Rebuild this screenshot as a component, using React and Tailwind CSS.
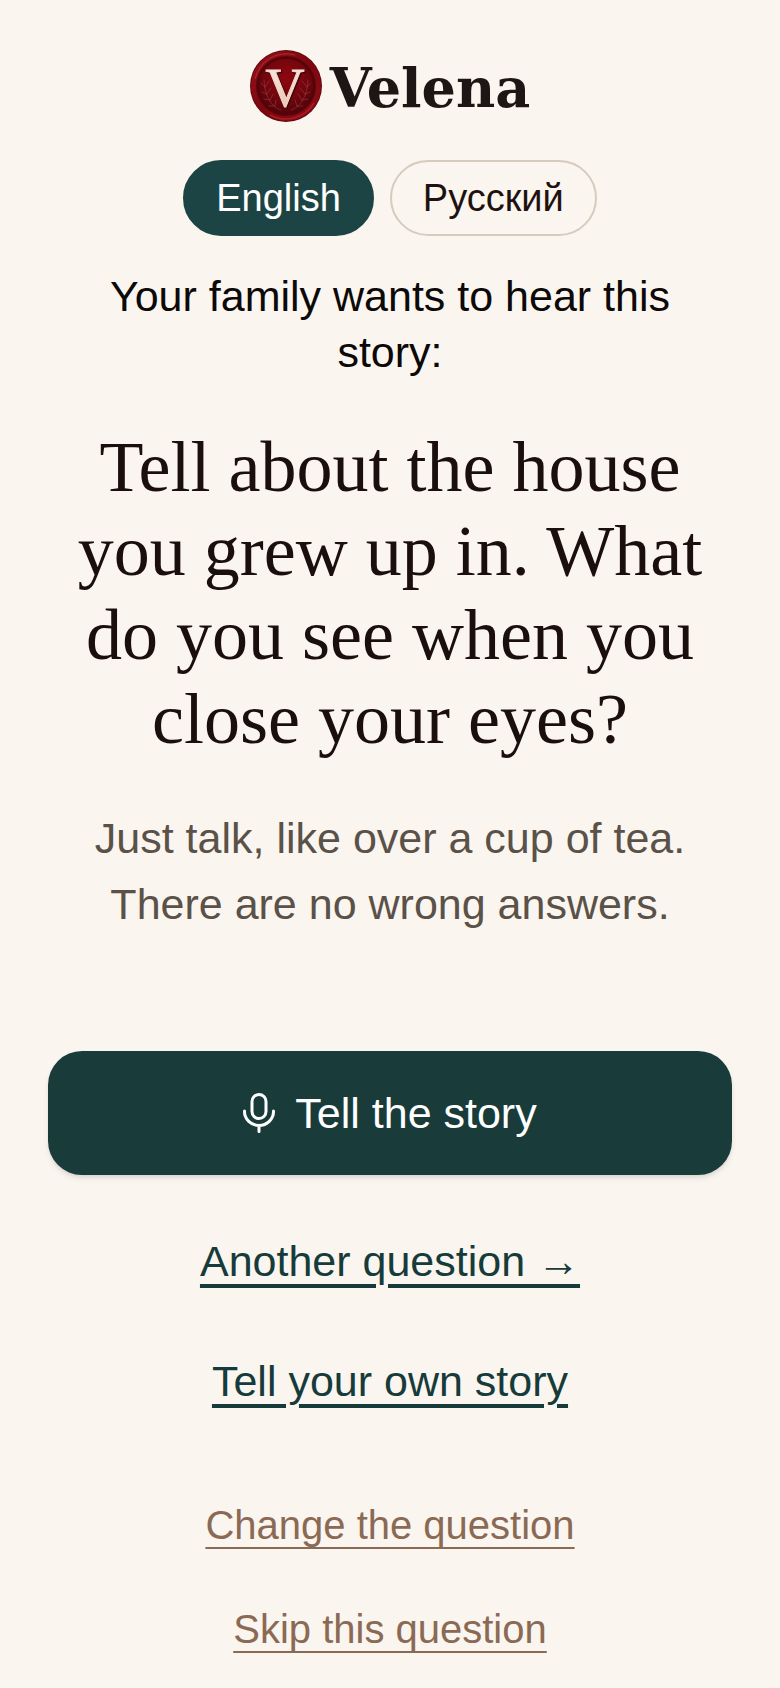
import React, { useState } from 'react';

const languages = [
  { code: 'en', label: 'English' },
  { code: 'ru', label: 'Русский' },
];

function Seal() {
  return (
    <svg viewBox="0 0 72 72" className="size-18 shrink-0" aria-hidden="true">
      <defs>
        <radialGradient id="wax" cx="50%" cy="35%" r="60%">
          <stop offset="0" stopColor="#8e0710" />
          <stop offset="0.6" stopColor="#74060e" />
          <stop offset="1" stopColor="#56040a" />
        </radialGradient>
        <linearGradient id="rim" x1="0" y1="0" x2="1" y2="1">
          <stop offset="0" stopColor="#98101a" />
          <stop offset="0.5" stopColor="#7c070f" />
          <stop offset="1" stopColor="#8e0d16" />
        </linearGradient>
        <linearGradient id="letter" x1="0" y1="0" x2="0" y2="1">
          <stop offset="0" stopColor="#fbeee4" />
          <stop offset="1" stopColor="#e8bfae" />
        </linearGradient>
      </defs>
      <circle cx="36" cy="36" r="36" fill="#5e050b" />
      <circle cx="36" cy="36" r="32.5" fill="none" stroke="url(#rim)" strokeWidth="5" />
      <path d="M5 29A32 32 0 0 1 45 5" fill="none" stroke="#b02a32" strokeWidth="1" />
      <path d="M20 65A33 33 0 0 0 64 53" fill="none" stroke="#a81c25" strokeWidth="1.5" />
      <circle cx="36" cy="36" r="28" fill="url(#wax)" stroke="#520409" strokeWidth="1.5" />
      <g fill="none" stroke="#b4505a" strokeWidth="0.7" strokeLinecap="round" opacity="0.6">
        <path d="M31 60C22 57 15 48 14 30M15 37l-4-4M15 37l4-6M17 44l-5-2M17 44l4-6M20 50l-6-1M20 50l3-6M25 56l-6 0M25 56l1-6" />
        <path d="M41 60C50 57 57 48 58 30M57 37l4-4M57 37l-5-6M55 44l5-2M55 44l-5-6M52 50l6-1M52 50l-4-6M47 56l6 0M47 56l-2-6" />
      </g>
      <text
        x="36"
        y="57"
        textAnchor="middle"
        fontSize="54"
        fill="#42030a"
        stroke="#42030a"
        strokeWidth="1.5"
        className="font-['Liberation_Serif',serif]"
      >
        V
      </text>
      <text
        x="35"
        y="56"
        textAnchor="middle"
        fontSize="54"
        fill="url(#letter)"
        stroke="#f3d8ca"
        strokeWidth="1"
        className="font-['Liberation_Serif',serif]"
      >
        V
      </text>
    </svg>
  );
}

function MicIcon() {
  return (
    <svg
      viewBox="0 0 32 40"
      className="h-10 w-8"
      fill="none"
      stroke="currentColor"
      strokeWidth="3"
      strokeLinecap="round"
      aria-hidden="true"
    >
      <rect x="9" y="1.5" width="14" height="24" rx="7" />
      <path d="M1.5 18v.5a14.5 14 0 0 0 29 0v-.5M16 33v5.5" />
    </svg>
  );
}

function App() {
  const [language, setLanguage] = useState('en');

  return (
    <main className="flex min-h-screen flex-col items-center bg-[#faf5ef] px-12 pt-12 pb-2 text-center font-['Liberation_Sans',Arial,sans-serif]">
      <header className="flex h-19 items-center gap-2">
        <Seal />
        <span className="pt-1 font-['DejaVu_Serif',serif] text-[54px] leading-none font-bold text-[#1e1614]">
          Velena
        </span>
      </header>

      <div className="mt-9 flex gap-4">
        {languages.map((item) => (
          <button
            key={item.code}
            type="button"
            aria-pressed={language === item.code}
            onClick={() => setLanguage(item.code)}
            className={`h-19 rounded-full border-2 px-[31px] text-[38px] leading-none ${
              language === item.code
                ? 'border-[#1c4444] bg-[#1c4444] text-white'
                : 'border-[#d5ccbd] text-[#1e1210]'
            }`}
          >
            {item.label}
          </button>
        ))}
      </div>

      <p className="mt-8 px-8 text-[43px] leading-14 text-[#0c0908]">
        Your family wants to hear this story:
      </p>

      <h1 className="mt-[45px] font-['Liberation_Serif',serif] text-[72px] leading-21 text-[#1a0f0d]">
        Tell about the house you grew up in. What do you see when you close your eyes?
      </h1>

      <p className="mt-11 px-8 text-[43px] leading-[66px] text-[#5a5148]">
        Just talk, like over a cup of tea. There are no wrong answers.
      </p>

      <button
        type="button"
        className="mt-[114px] flex h-31 w-full items-center justify-center gap-5 rounded-[34px] bg-[#193c3b] text-[43px] leading-none text-white shadow-md"
      >
        <MicIcon />
        Tell the story
      </button>

      <nav className="mt-[62px] flex flex-col items-center text-[43px] leading-12 text-[#173b3a]">
        <a href="#another" className="underline decoration-4 underline-offset-8">
          Another question →
        </a>
        <a href="#own" className="mt-18 underline decoration-4 underline-offset-8">
          Tell your own story
        </a>
      </nav>

      <nav className="mt-24 flex flex-col items-center gap-14 text-[40px] leading-12 text-[#8a6a54]">
        <a href="#change" className="underline decoration-2 underline-offset-8">
          Change the question
        </a>
        <a href="#skip" className="underline decoration-2 underline-offset-8">
          Skip this question
        </a>
      </nav>
    </main>
  );
}

export default App;
